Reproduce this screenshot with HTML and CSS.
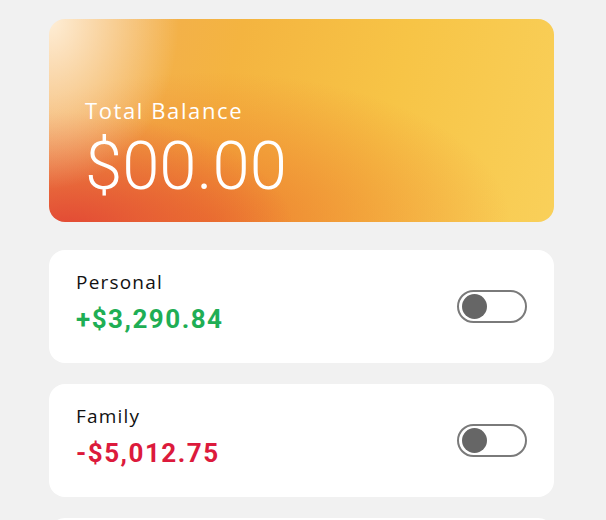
FILE: index.html
```html
<!DOCTYPE html>
<html>
<head>
<meta charset="utf-8">
<link rel="stylesheet" href="styles.css">
</head>
<body>
<main class="wallet">
  <section class="balance-card">
    <div class="balance-label">Total Balance</div>
    <div class="balance-value">$00.00</div>
  </section>
  <section class="account-card">
    <div class="account-info">
      <div class="account-name">Personal</div>
      <div class="account-amount positive">+$3,290.84</div>
    </div>
    <span class="toggle"><span class="knob"></span></span>
  </section>
  <section class="account-card">
    <div class="account-info">
      <div class="account-name">Family</div>
      <div class="account-amount negative">-$5,012.75</div>
    </div>
    <span class="toggle"><span class="knob"></span></span>
  </section>
  <section class="account-card"></section>
</main>
</body>
</html>
```
FILE: styles.css
```css
* { box-sizing: border-box; }
html, body {
  margin: 0;
  background: #f1f1f1;
  overflow: hidden;
  height: 520px;
}
.wallet {
  display: flex;
  flex-direction: column;
  gap: 21px;
  padding: 19px 52px 0 49px;
}
.balance-card {
  height: 203px;
  flex-shrink: 0;
  border-radius: 16px;
  padding: 77px 0 0 36px;
  margin-bottom: 7px;
  color: #fff;
  background:
    radial-gradient(ellipse 130px 170px at 0% 0%, rgba(255,242,222,0.95), rgba(255,238,210,0) 100%),
    radial-gradient(ellipse 230px 120px at 3% 105%, rgba(226,70,52,1), rgba(230,86,50,0) 100%),
    radial-gradient(ellipse 300px 150px at 32% 100%, rgba(236,118,44,0.85), rgba(236,118,44,0) 100%),
    linear-gradient(105deg, #f1ab5a 0%, #f4b440 35%, #f7c446 65%, #f9d05a 100%);
}
.balance-label {
  font-family: "Open Sans", sans-serif;
  font-size: 22px;
  line-height: 28px;
  letter-spacing: 1.6px;
}
.balance-value {
  font-family: Roboto, sans-serif;
  font-weight: 300;
  font-size: 67px;
  line-height: 76px;
  margin-top: 4px;
}
.account-card {
  height: 113px;
  flex-shrink: 0;
  background: #fff;
  border-radius: 16px;
  display: flex;
  align-items: center;
  justify-content: space-between;
  padding: 0 27px 0 27px;
}
.account-info {
  align-self: flex-start;
  display: flex;
  flex-direction: column;
  gap: 10px;
  padding-top: 20px;
}
.account-name {
  font-family: "Open Sans", sans-serif;
  font-size: 19px;
  line-height: 24px;
  letter-spacing: 1.2px;
  color: #111;
}
.account-amount {
  font-family: Roboto, sans-serif;
  font-weight: 700;
  font-size: 26px;
  line-height: 30px;
  letter-spacing: 1.5px;
}
.positive { color: #1fae55; }
.negative { color: #dc1a3c; }
.toggle {
  width: 70px;
  height: 33px;
  border: 2px solid #7a7a7a;
  border-radius: 17px;
  display: flex;
  align-items: center;
  padding-left: 3px;
}
.knob {
  width: 25px;
  height: 25px;
  border-radius: 50%;
  background: #666;
}
```
